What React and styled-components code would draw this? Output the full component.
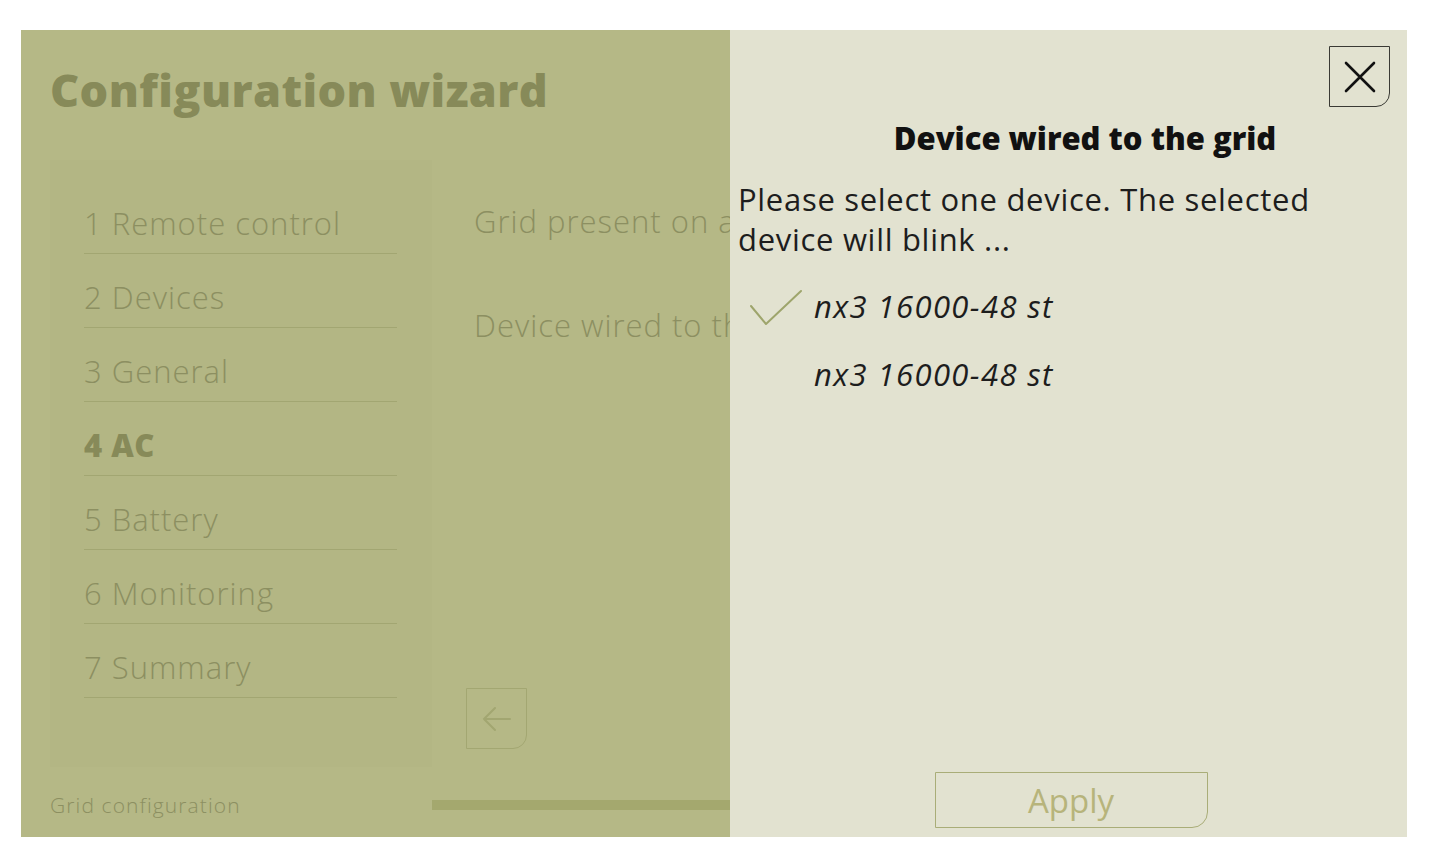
import React from "react";
import styled, { createGlobalStyle } from "styled-components";

const Global = createGlobalStyle`
  html, body { margin: 0; padding: 0; background: #ffffff; }
  body { font-family: "Open Sans", Lato, sans-serif; }
  * { box-sizing: border-box; }
`;

const Page = styled.div`
  width: 1436px;
  height: 860px;
  padding: 30px 0 0 21px;
`;

const Frame = styled.div`
  display: flex;
  width: 1386px;
  height: 807px;
`;

const Wizard = styled.div`
  width: 709px;
  display: flex;
  flex-direction: column;
  background: #b5b886;
  overflow: hidden;
`;

const Title = styled.h1`
  margin: 0;
  height: 130px;
  padding: 29px 0 0 29px;
  font-family: "Open Sans", sans-serif;
  font-weight: 800;
  font-size: 45px;
  letter-spacing: 0.4px;
  color: #878a59;
`;

const Card = styled.div`
  display: flex;
  margin-left: 29px;
  height: 607px;
  background: #b3b684;
`;

const Sidebar = styled.ul`
  list-style: none;
  margin: 0;
  width: 382px;
  padding: 20px 35px 0 34px;
`;

const Step = styled.li`
  height: 74px;
  display: flex;
  align-items: flex-end;
  padding-bottom: 9px;
  border-bottom: 1.5px solid #a2a672;
  font-size: 31px;
  letter-spacing: ${(p) => (p.$active ? "0.5px" : "1px")};
  font-weight: ${(p) => (p.$active ? 800 : 300)};
  color: ${(p) => (p.$active ? "#878a59" : "#8c8f61")};
  white-space: nowrap;
`;

const Content = styled.div`
  flex: 1;
  display: flex;
  flex-direction: column;
  padding: 40px 0 18px 42px;
  background: #b5b886;
  white-space: nowrap;
  overflow: hidden;
`;

const Field = styled.div`
  font-size: 31px;
  letter-spacing: 1px;
  font-weight: 300;
  color: #8c8f61;
  height: 104px;
`;

const Spacer = styled.div`
  flex: 1;
`;

const BackButton = styled.div`
  width: 61px;
  height: 61px;
  border: 1.5px solid #a3a772;
  border-bottom-right-radius: 14px;
  margin-left: -8px;
  display: flex;
  align-items: center;
  justify-content: center;
`;

const Footer = styled.div`
  flex: 1;
  display: flex;
  align-items: center;
  padding: 6px 0 0 29px;
`;

const FooterLabel = styled.div`
  width: 382px;
  font-size: 21px;
  letter-spacing: 1.1px;
  font-weight: 300;
  color: #8c8f61;
`;

const Progress = styled.div`
  flex: 1;
  height: 10px;
  background: #a4a86e;
`;

const Dialog = styled.div`
  flex: 1;
  background: #e2e2d0;
  display: flex;
  flex-direction: column;
  padding: 16px 17px 9px 8px;
`;

const TopRow = styled.div`
  display: flex;
  justify-content: flex-end;
`;

const CloseButton = styled.button`
  width: 61px;
  height: 61px;
  padding: 0;
  background: transparent;
  border: 1.5px solid #3a3a34;
  border-bottom-right-radius: 14px;
  display: flex;
  align-items: center;
  justify-content: center;
`;

const DialogTitle = styled.h2`
  margin: 10px 0 0 0;
  padding-left: 42px;
  text-align: center;
  font-family: "Open Sans", sans-serif;
  font-weight: 800;
  font-size: 31px;
  color: #111111;
`;

const Description = styled.p`
  margin: 20px 0 0 0;
  font-size: 31px;
  letter-spacing: 0.7px;
  line-height: 40px;
  font-weight: 400;
  color: #1d1d1d;
`;

const Options = styled.div`
  display: flex;
  flex-direction: column;
  margin-top: 13px;
`;

const Option = styled.div`
  height: 68px;
  display: flex;
  align-items: center;
`;

const CheckSlot = styled.div`
  width: 76px;
  display: flex;
  justify-content: center;
  padding-left: 0px;
  margin-top: 4px;
`;

const OptionLabel = styled.span`
  font-size: 31px;
  letter-spacing: 1.4px;
  font-style: italic;
  font-weight: 400;
  color: #1d1d1d;
`;

const ApplyRow = styled.div`
  margin-top: auto;
  display: flex;
  justify-content: center;
  padding-left: 14px;
`;

const ApplyButton = styled.button`
  width: 273px;
  height: 56px;
  background: transparent;
  border: 1.5px solid #a9ad78;
  border-bottom-right-radius: 16px;
  font-family: "Open Sans", sans-serif;
  font-size: 33px;
  font-weight: 400;
  color: #b7b47b;
  padding: 0;
  line-height: 1;
`;

const steps = [
  "1 Remote control",
  "2 Devices",
  "3 General",
  "4 AC",
  "5 Battery",
  "6 Monitoring",
  "7 Summary",
];

export default function App() {
  return (
    <Page>
      <Global />
      <Frame>
        <Wizard>
          <Title>Configuration wizard</Title>
          <Card>
            <Sidebar>
              {steps.map((s) => (
                <Step key={s} $active={s === "4 AC"}>
                  {s}
                </Step>
              ))}
            </Sidebar>
            <Content>
              <Field>Grid present on all phases</Field>
              <Field>Device wired to the grid</Field>
              <Spacer />
              <BackButton>
                <svg width="34" height="34" viewBox="0 0 34 34" fill="none">
                  <path
                    d="M30 17H4M15 6L4 17l11 11"
                    stroke="#a2a671"
                    strokeWidth="2"
                    strokeLinecap="round"
                    strokeLinejoin="round"
                  />
                </svg>
              </BackButton>
            </Content>
          </Card>
          <Footer>
            <FooterLabel>Grid configuration</FooterLabel>
            <Progress />
          </Footer>
        </Wizard>
        <Dialog>
          <TopRow>
            <CloseButton aria-label="Close">
              <svg width="34" height="34" viewBox="0 0 34 34" fill="none">
                <path
                  d="M3 3L31 31M31 3L3 31"
                  stroke="#111"
                  strokeWidth="2.6"
                  strokeLinecap="round"
                />
              </svg>
            </CloseButton>
          </TopRow>
          <DialogTitle>Device wired to the grid</DialogTitle>
          <Description>
            Please select one device. The selected
            <br />
            device will blink ...
          </Description>
          <Options>
            <Option>
              <CheckSlot>
                <svg width="54" height="40" viewBox="0 0 54 40" fill="none">
                  <path
                    d="M2 18L17 36L52 3"
                    stroke="#9ea56c"
                    strokeWidth="2"
                    strokeLinecap="round"
                    strokeLinejoin="round"
                  />
                </svg>
              </CheckSlot>
              <OptionLabel>nx3 16000-48 st</OptionLabel>
            </Option>
            <Option>
              <CheckSlot />
              <OptionLabel>nx3 16000-48 st</OptionLabel>
            </Option>
          </Options>
          <ApplyRow>
            <ApplyButton>Apply</ApplyButton>
          </ApplyRow>
        </Dialog>
      </Frame>
    </Page>
  );
}
